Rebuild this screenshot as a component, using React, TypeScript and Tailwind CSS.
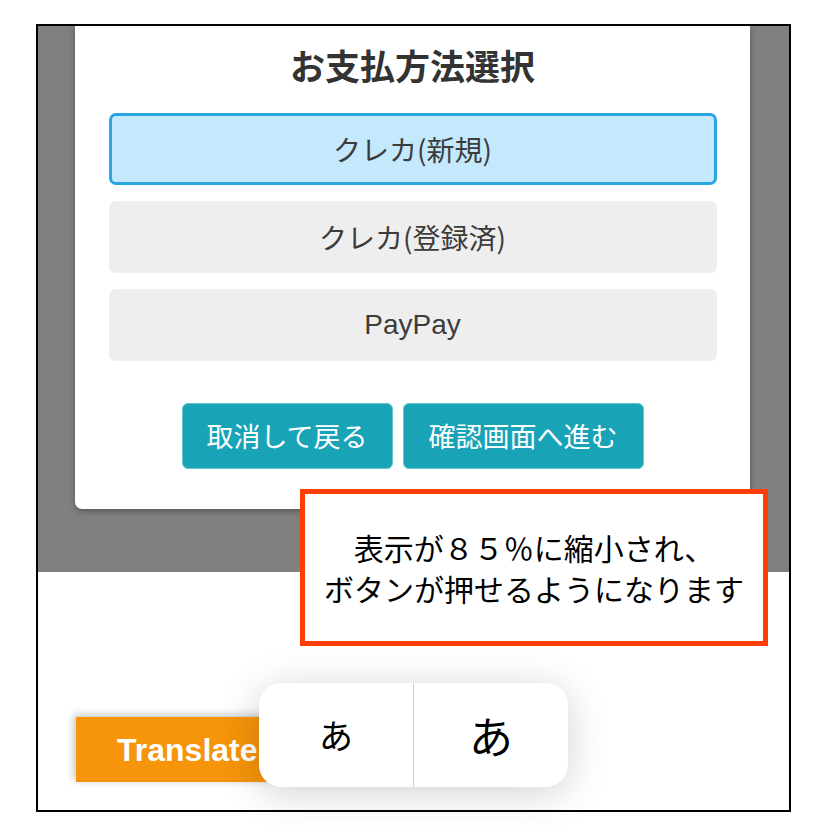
import React from "react";

const jp = { fontFamily: '"Noto Sans CJK JP", "Noto Sans", sans-serif' };

export default function App() {
  return (
    <div className="w-[828px] h-[838px] bg-white pt-[24px] pl-[36px] relative" style={jp}>
      <div className="w-[755px] h-[788px] border-2 border-black bg-white flex flex-col overflow-hidden">
        {/* gray overlay area */}
        <div className="h-[546px] bg-[#808080] pl-[37px] shrink-0">
          <div className="w-[675px] h-[483px] bg-white rounded-b-[7px] shadow-[0_2px_6px_rgba(0,0,0,0.35)] flex flex-col items-center">
            <div className="h-[76px] flex items-center justify-center text-[35px] font-bold text-[#333] leading-none">
              お支払方法選択
            </div>
            <div className="mt-[11px] w-[608px] flex flex-col gap-[16px]">
              <div className="h-[72px] rounded-[7px] bg-[#c4e8fc] border-[3px] border-[#2ba5e1] flex items-center justify-center text-[28px] text-[#3c3c3c]">
                クレカ(新規)
              </div>
              <div className="h-[72px] rounded-[7px] bg-[#eeeeee] flex items-center justify-center text-[28px] text-[#3c3c3c]">
                クレカ(登録済)
              </div>
              <div className="h-[72px] rounded-[7px] bg-[#eeeeee] flex items-center justify-center text-[28px] text-[#3c3c3c]" style={{ fontFamily: '"Liberation Sans", "Noto Sans CJK JP", sans-serif' }}>
                PayPay
              </div>
            </div>
            <div className="mt-[42px] flex gap-[10px]">
              <div className="w-[211px] h-[66px] rounded-[6px] bg-[#19a3b7] border border-[#63c4d2] flex items-center justify-center text-white text-[27px]">
                取消して戻る
              </div>
              <div className="w-[241px] h-[66px] rounded-[6px] bg-[#19a3b7] border border-[#63c4d2] flex items-center justify-center text-white text-[27px]">
                確認画面へ進む
              </div>
            </div>
          </div>
        </div>
        {/* white bottom area */}
        <div className="flex-1 bg-white pt-[145px] pl-[38px]">
          <div
            className="w-[240px] h-[65px] bg-[#f6940a] shadow-[-2px_-2px_8px_rgba(0,0,0,0.25)] flex items-center pl-[41px] text-white text-[32px] font-bold"
            style={{ fontFamily: '"Liberation Sans", Arial, sans-serif' }}
          >
            Translate
          </div>
        </div>
      </div>

      {/* text size popup */}
      <div className="absolute left-[259px] top-[683px] w-[309px] h-[104px] bg-white rounded-[22px] shadow-[0_6px_40px_rgba(0,0,0,0.18)] flex">
        <div className="w-[154px] flex items-center justify-center text-[34px] text-black leading-none">あ</div>
        <div className="w-px bg-[#cfcfcf]" />
        <div className="flex-1 flex items-center justify-center text-[44px] text-black leading-none">あ</div>
      </div>

      {/* annotation */}
      <div className="absolute left-[300px] top-[489px] w-[468px] h-[157px] border-[5px] border-[#ff3d00] bg-white flex flex-col items-center justify-center text-[30px] leading-[41px] text-black">
        <div>表示が８５％に縮小され、</div>
        <div>ボタンが押せるようになります</div>
      </div>
    </div>
  );
}
